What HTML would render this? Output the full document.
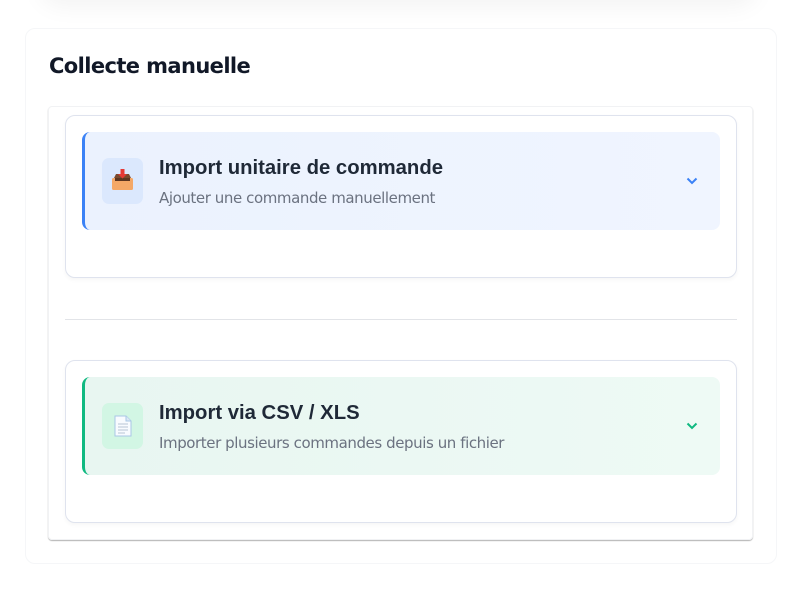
<!DOCTYPE html>
<html><head><meta charset="utf-8"><style>
*{box-sizing:border-box;margin:0;padding:0}
body{width:797px;height:599px;background:#fff;font-family:"Liberation Sans",sans-serif;position:relative;overflow:hidden}
.topsh{position:absolute;left:40px;right:40px;top:-40px;height:40px;box-shadow:0 6px 24px rgba(0,0,0,.05);border-radius:20px}
.outer{position:absolute;left:25px;top:28px;width:752px;height:536px;border:1px solid #f5f6f8;border-radius:10px;background:#fff}
h2{position:absolute;left:49px;top:54px;font-size:21px;font-weight:bold;color:#111827;font-family:"DejaVu Sans","Liberation Sans",sans-serif;letter-spacing:-0.6px}
.inner{position:absolute;left:48px;top:106px;width:705px;height:434px;border:1px solid #f1f2f4;border-radius:4px;box-shadow:0 1px 1px rgba(0,0,0,.3)}
.card{position:absolute;left:65px;width:672px;height:163px;border:1px solid #dfe3ee;border-radius:10px;background:#fff;box-shadow:0 2px 4px rgba(0,0,0,.04)}
.hd{position:absolute;left:16px;top:16px;width:638px;height:98px;border-radius:8px}
.ic{position:absolute;left:17px;top:26px;width:41px;height:46px;border-radius:7px}
.t{position:absolute;left:74px;font-size:20.3px;font-weight:bold;color:#1f2937;font-family:"Liberation Sans",sans-serif}
.s{position:absolute;left:74px;font-size:15px;color:#6b7280;font-family:"DejaVu Sans",sans-serif;letter-spacing:-0.42px}
.ch{position:absolute;left:601px;top:45px}
.div{position:absolute;left:65px;top:319px;width:672px;height:1px;background:#e2e4e8}
</style></head><body>
<div class="topsh"></div>
<div class="outer"></div>
<h2>Collecte manuelle</h2>
<div class="inner"></div>
<div class="card" style="top:115px">
 <div class="hd" style="background:linear-gradient(90deg,#ebf2fe,#f0f5ff);border-left:3px solid #3b82f6">
  <div class="ic" style="background:#dbe8fd">
   <svg width="41" height="46" viewBox="0 0 41 46"><rect x="10" y="20" width="21" height="12" rx="1.5" fill="#f4a867"/><path d="M12 20 L14 16 H27 L29 20 Z" fill="#7a4a2e"/><rect x="13" y="20" width="15" height="3" fill="#5b3520"/><path d="M18.5 11 H22.5 V16 H25 L20.5 20.5 L16 16 H18.5 Z" fill="#e53935"/></svg>
  </div>
  <div class="t" style="top:25px">Import unitaire de commande</div>
  <div class="s" style="top:57px">Ajouter une commande manuellement</div>
  <svg class="ch" width="12" height="8" viewBox="0 0 12 8"><path d="M1.5 1.5 L6 6 L10.5 1.5" fill="none" stroke="#3b82f6" stroke-width="2"/></svg>
 </div>
</div>
<div class="div"></div>
<div class="card" style="top:360px">
 <div class="hd" style="background:linear-gradient(90deg,#e8f6f1,#eefaf5);border-left:3px solid #10b981">
  <div class="ic" style="background:#d2f6e4">
   <svg width="41" height="46" viewBox="0 0 41 46"><path d="M13 13 H24 L29 18 V33 H13 Z" fill="#f8fbff" stroke="#a9c7e6" stroke-width="1"/><path d="M24 13 V18 H29" fill="#dbe8f5" stroke="#a9c7e6" stroke-width="1"/><g stroke="#b8c6d4" stroke-width="1"><line x1="16" y1="21" x2="26" y2="21"/><line x1="16" y1="24" x2="26" y2="24"/><line x1="16" y1="27" x2="26" y2="27"/><line x1="16" y1="30" x2="23" y2="30"/></g></svg>
  </div>
  <div class="t" style="top:25px">Import via CSV / XLS</div>
  <div class="s" style="top:57px">Importer plusieurs commandes depuis un fichier</div>
  <svg class="ch" width="12" height="8" viewBox="0 0 12 8"><path d="M1.5 1.5 L6 6 L10.5 1.5" fill="none" stroke="#10b981" stroke-width="2"/></svg>
 </div>
</div>
</body></html>
